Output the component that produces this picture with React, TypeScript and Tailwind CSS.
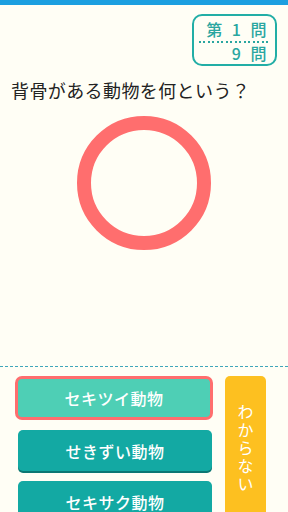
const font = { fontFamily: '"Noto Sans CJK JP", "Noto Sans", sans-serif' };

const choiceClass =
  "w-[194px] h-[41px] shrink-0 rounded-[5px] bg-[#13a9a3] shadow-[0_2px_0_#0b7773] flex items-center justify-center text-white text-[16px] font-medium tracking-[0.5px]";

export default function App() {
  return (
    <div
      className="w-[288px] h-[512px] bg-[#fffef5] overflow-hidden flex flex-col"
      style={font}
    >
      <div className="h-[5px] shrink-0 bg-[#1c9fe0]" />

      <div className="flex justify-end pr-[11px] pt-[9px] shrink-0">
        <div className="w-[85px] h-[52px] border-2 border-[#22aea6] rounded-[10px] flex flex-col items-center pt-[3px] text-[#2aa6a0] text-[16px] font-medium leading-[20px]">
          <div className="w-[70px] text-right tracking-[3px]">第 1 問</div>
          <div className="w-[71px] h-[2px] mt-[2px] bg-[repeating-linear-gradient(90deg,#2aa6a0_0_2px,transparent_2px_4.5px)]" />
          <div className="w-[70px] text-right tracking-[3px]">9 問</div>
        </div>
      </div>

      <div className="pl-[11px] mt-[13px] text-[18px] leading-[22px] text-[#222] tracking-[0.4px] shrink-0">
        背骨がある動物を何という？
      </div>

      <div className="flex justify-center mt-[14px] shrink-0">
        <svg width="136" height="136" viewBox="0 0 136 136">
          <circle cx="68" cy="68" r="60" fill="none" stroke="#ff6e6e" strokeWidth="14" />
        </svg>
      </div>

      <div className="mt-[115px] shrink-0 border-t-[1.5px] border-dashed border-[#3fa6ba]" />

      <div className="flex mt-[9px] pl-[15px] gap-[12px] shrink-0">
        <div className="flex flex-col gap-[10px] w-[198px]">
          <div className="w-[198px] h-[44px] shrink-0 rounded-[7px] border-[3px] border-[#ff6e6e] bg-[#4ecfb5] flex items-center justify-center text-white text-[16px] font-medium tracking-[0.5px]">
            セキツイ動物
          </div>
          <div className="flex flex-col gap-[10px] pl-[3px]">
            <div className={choiceClass}>せきずい動物</div>
            <div className={choiceClass}>セキサク動物</div>
          </div>
        </div>
        <div className="w-[41px] h-[160px] rounded-[5px] bg-[#fdc020] flex justify-center pt-[28px] text-white">
          <span className="[writing-mode:vertical-rl] text-[16px] tracking-[2px] leading-[20px]">
            わからない
          </span>
        </div>
      </div>
    </div>
  );
}
